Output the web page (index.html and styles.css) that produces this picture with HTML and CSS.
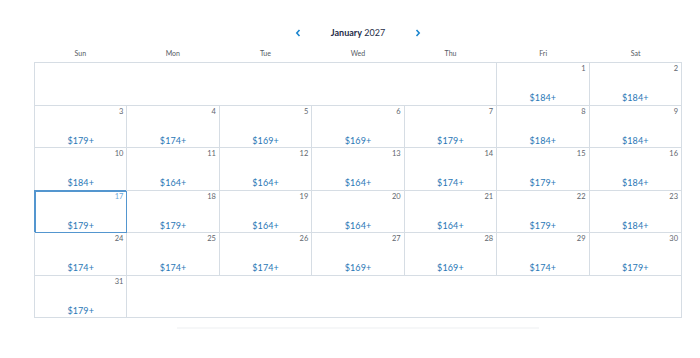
FILE: index.html
```html
<!DOCTYPE html>
<html>
<head>
<meta charset="utf-8">
<link rel="stylesheet" href="styles.css">
</head>
<body>
<div class="cal">
  <div class="nav">
    <span class="arrow">
      <svg width="6" height="8" viewBox="0 0 6 8"><path d="M4.5 1 L1.8 4 L4.5 7" fill="none" stroke="#1b86cf" stroke-width="1.6"/></svg>
    </span>
    <span class="title"><b>January</b> 2027</span>
    <span class="arrow">
      <svg width="6" height="8" viewBox="0 0 6 8"><path d="M1.5 1 L4.2 4 L1.5 7" fill="none" stroke="#1b86cf" stroke-width="1.6"/></svg>
    </span>
  </div>
  <div class="dows">
    <div>Sun</div><div>Mon</div><div>Tue</div><div>Wed</div><div>Thu</div><div>Fri</div><div>Sat</div>
  </div>
  <div class="grid">
    <div class="cell empty span5"></div>
    <div class="cell"><span class="num">1</span><span class="price">$184+</span></div>
    <div class="cell"><span class="num">2</span><span class="price">$184+</span></div>
    <div class="cell"><span class="num">3</span><span class="price">$179+</span></div>
    <div class="cell"><span class="num">4</span><span class="price">$174+</span></div>
    <div class="cell"><span class="num">5</span><span class="price">$169+</span></div>
    <div class="cell"><span class="num">6</span><span class="price">$169+</span></div>
    <div class="cell"><span class="num">7</span><span class="price">$179+</span></div>
    <div class="cell"><span class="num">8</span><span class="price">$184+</span></div>
    <div class="cell"><span class="num">9</span><span class="price">$184+</span></div>
    <div class="cell"><span class="num">10</span><span class="price">$184+</span></div>
    <div class="cell"><span class="num">11</span><span class="price">$164+</span></div>
    <div class="cell"><span class="num">12</span><span class="price">$164+</span></div>
    <div class="cell"><span class="num">13</span><span class="price">$164+</span></div>
    <div class="cell"><span class="num">14</span><span class="price">$174+</span></div>
    <div class="cell"><span class="num">15</span><span class="price">$179+</span></div>
    <div class="cell"><span class="num">16</span><span class="price">$184+</span></div>
    <div class="cell selected"><span class="num">17</span><span class="price">$179+</span></div>
    <div class="cell"><span class="num">18</span><span class="price">$179+</span></div>
    <div class="cell"><span class="num">19</span><span class="price">$164+</span></div>
    <div class="cell"><span class="num">20</span><span class="price">$164+</span></div>
    <div class="cell"><span class="num">21</span><span class="price">$164+</span></div>
    <div class="cell"><span class="num">22</span><span class="price">$179+</span></div>
    <div class="cell"><span class="num">23</span><span class="price">$184+</span></div>
    <div class="cell"><span class="num">24</span><span class="price">$174+</span></div>
    <div class="cell"><span class="num">25</span><span class="price">$174+</span></div>
    <div class="cell"><span class="num">26</span><span class="price">$174+</span></div>
    <div class="cell"><span class="num">27</span><span class="price">$169+</span></div>
    <div class="cell"><span class="num">28</span><span class="price">$169+</span></div>
    <div class="cell"><span class="num">29</span><span class="price">$174+</span></div>
    <div class="cell"><span class="num">30</span><span class="price">$179+</span></div>
    <div class="cell"><span class="num">31</span><span class="price">$179+</span></div>
    <div class="cell empty span6"></div>
  </div>
  <div class="shadow"></div>
</div>
</body>
</html>
```
FILE: styles.css
```css
html, body {
  margin: 0;
  padding: 0;
  background: #ffffff;
}
body {
  font-family: Lato, "Noto Sans", sans-serif;
}
.cal {
  width: 648px;
  margin-left: 34px;
  padding-top: 27px;
}
.nav {
  display: flex;
  justify-content: center;
  align-items: center;
  height: 12px;
}
.arrow {
  width: 8px;
  height: 12px;
  display: flex;
  align-items: center;
  justify-content: center;
}
.title {
  width: 112px;
  text-align: center;
  font-size: 9px;
  color: #1e2d48;
  line-height: 12px;
}
.title b {
  font-weight: 700;
}
.dows {
  display: grid;
  grid-template-columns: repeat(7, 1fr);
  margin-top: 10px;
  height: 13px;
  font-size: 7px;
  color: #555b63;
  text-align: center;
  line-height: 9px;
}
.grid {
  display: grid;
  grid-template-columns: repeat(7, 1fr);
  grid-auto-rows: 42.5px;
  border-top: 1px solid #d6dde4;
  border-left: 1px solid #d6dde4;
}
.cell {
  border-right: 1px solid #d6dde4;
  border-bottom: 1px solid #d6dde4;
  display: flex;
  flex-direction: column;
  justify-content: space-between;
  padding: 1px 3px 1.5px 3px;
  box-sizing: border-box;
}
.span5 { grid-column: span 5; }
.span6 { grid-column: span 6; }
.num {
  text-align: right;
  font-size: 7.5px;
  color: #60666e;
  line-height: 9px;
}
.price {
  text-align: center;
  font-size: 9px;
  color: #2a78b6;
  line-height: 11px;
  letter-spacing: 0.1px;
}
.selected {
  outline: 1px solid #5496cf;
  outline-offset: -1px;
  box-shadow: -1px -1px 0 0 #5496cf;
}
.selected .num {
  color: #6aa6d8;
}
.shadow {
  width: 362px;
  height: 2px;
  margin: 9px 0 0 143px;
  background: #f6f7f8;
}
```
